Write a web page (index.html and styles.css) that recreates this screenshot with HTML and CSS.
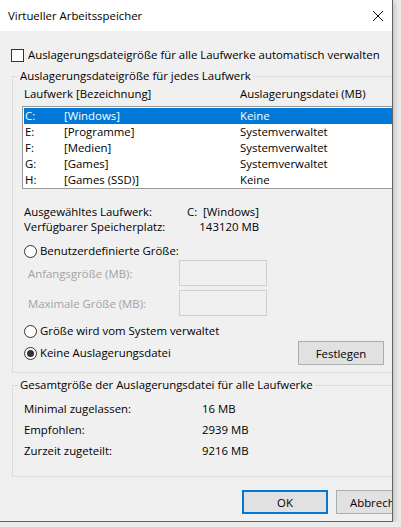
FILE: index.html
```html
<!DOCTYPE html>
<html>
<head>
    <title>Virtueller Arbeitsspeicher</title>
    <link rel="stylesheet" href="styles.css">
</head>
<body>
    <div class="window">
        <div class="titlebar">
            <span class="title">Virtueller Arbeitsspeicher</span>
            <svg class="close" width="12" height="12" viewBox="0 0 12 12">
                <path d="M1 1 L11 11 M11 1 L1 11" stroke="#111" stroke-width="1" fill="none"/>
            </svg>
        </div>
        <div class="content">
            <label class="check-row">
                <span class="checkbox"></span>
                Auslagerungsdateigröße für alle Laufwerke automatisch verwalten
            </label>

            <fieldset class="group group-drives">
                <legend>Auslagerungsdateigröße für jedes Laufwerk</legend>
                <div class="list-header">
                    <span class="col-drive">Laufwerk [Bezeichnung]</span>
                    <span>Auslagerungsdatei (MB)</span>
                </div>
                <div class="listbox">
                    <div class="list-row selected"><span class="col-letter">C:</span><span class="col-name">[Windows]</span><span>Keine</span></div>
                    <div class="list-row"><span class="col-letter">E:</span><span class="col-name">[Programme]</span><span>Systemverwaltet</span></div>
                    <div class="list-row"><span class="col-letter">F:</span><span class="col-name">[Medien]</span><span>Systemverwaltet</span></div>
                    <div class="list-row"><span class="col-letter">G:</span><span class="col-name">[Games]</span><span>Systemverwaltet</span></div>
                    <div class="list-row"><span class="col-letter">H:</span><span class="col-name">[Games (SSD)]</span><span>Keine</span></div>
                </div>

                <div class="info">
                    <div class="info-row"><span class="info-label">Ausgewähltes Laufwerk:</span><span class="info-value">C:&nbsp;&nbsp;[Windows]</span></div>
                    <div class="info-row"><span class="info-label">Verfügbarer Speicherplatz:</span><span class="info-value">143120 MB</span></div>
                </div>

                <label class="radio-row first">
                    <span class="radio"></span>
                    Benutzerdefinierte Größe:
                </label>
                <div class="size-row first">
                    <span class="size-label">Anfangsgröße (MB):</span>
                    <span class="size-input"></span>
                </div>
                <div class="size-row">
                    <span class="size-label">Maximale Größe (MB):</span>
                    <span class="size-input"></span>
                </div>
                <label class="radio-row second">
                    <span class="radio"></span>
                    Größe wird vom System verwaltet
                </label>
                <div class="radio-button-row">
                    <label class="radio-row">
                        <span class="radio checked"></span>
                        Keine Auslagerungsdatei
                    </label>
                    <button class="btn">Festlegen</button>
                </div>
            </fieldset>

            <fieldset class="group group-total">
                <legend>Gesamtgröße der Auslagerungsdatei für alle Laufwerke</legend>
                <div class="total-row first"><span class="total-label">Minimal zugelassen:</span><span>16 MB</span></div>
                <div class="total-row"><span class="total-label">Empfohlen:</span><span>2939 MB</span></div>
                <div class="total-row"><span class="total-label">Zurzeit zugeteilt:</span><span>9216 MB</span></div>
            </fieldset>

            <div class="buttons">
                <button class="btn btn-default">OK</button>
                <button class="btn">Abbrechen</button>
            </div>
        </div>
    </div>
</body>
</html>
```

FILE: styles.css
```css
/* General styles */
* {
  box-sizing: border-box;
}

body {
  margin: 0;
  padding: 0;
  background-color: #ebebeb;
  font-family: "Open Sans", "Noto Sans", sans-serif;
  font-size: 11.4px;
  color: #000;
}

.window {
  width: 393px;
  height: 522px;
  overflow: hidden;
  background-color: #f0f0f0;
  border-right: 1px solid #616161;
  border-bottom: 1px solid #616161;
  box-shadow: 2px 2px 5px rgba(0, 0, 0, 0.18);
}

/* Title bar */
.titlebar {
  height: 31px;
  background-color: #fff;
  display: flex;
  align-items: center;
  padding-left: 8px;
}

.title {
  flex: 1;
  line-height: 16px;
}

.close {
  margin-right: 8px;
}

/* Content */
.content {
  width: 434px;
  padding: 0 12px;
}

.check-row {
  display: flex;
  align-items: center;
  height: 16px;
  margin: 16px 0 0 -1px;
  line-height: 16px;
}

.checkbox {
  width: 13px;
  height: 13px;
  border: 1px solid #333;
  background-color: #fff;
  margin-right: 4px;
  flex-shrink: 0;
}

/* Group boxes */
.group {
  margin: 0;
  padding: 0 0 0 11px;
  border: 1px solid #dcdcdc;
}

.group legend {
  padding: 0 2px;
  margin-left: -6px;
  line-height: 16px;
}

.group-drives {
  margin-top: 5px;
  padding-bottom: 7px;
}

.group-total {
  margin-top: 4px;
  padding-bottom: 12px;
}

/* Drive list */
.list-header {
  display: flex;
  line-height: 16px;
  margin-top: 2px;
}

.col-drive {
  width: 216px;
}

.listbox {
  width: 400px;
  height: 83px;
  margin: 4px 0 0 -2px;
  padding: 1px;
  border: 1px solid #9a9a9a;
  background-color: #fff;
}

.list-row {
  display: flex;
  height: 16px;
  line-height: 16px;
  padding-left: 1px;
}

.list-row.selected {
  background-color: #0078d7;
  color: #fff;
}

.col-letter {
  width: 39px;
}

.col-name {
  width: 176px;
}

/* Selected drive info */
.info {
  margin-top: 15px;
}

.info-row {
  display: flex;
  line-height: 15px;
}

.info-label {
  width: 163px;
  flex-shrink: 0;
}

.info-value {
  width: 72px;
  flex-shrink: 0;
  text-align: right;
}

/* Radios and sizes */
.radio-row {
  display: flex;
  align-items: center;
  height: 16px;
  line-height: 16px;
}

.radio-row.first {
  margin-top: 9px;
}

.radio-row.second {
  margin-top: 7px;
}

.radio {
  width: 13px;
  height: 13px;
  border: 1px solid #333;
  border-radius: 50%;
  background-color: #fff;
  margin-right: 3px;
  display: flex;
  align-items: center;
  justify-content: center;
  flex-shrink: 0;
}

.radio.checked::after {
  content: "";
  width: 7px;
  height: 7px;
  border-radius: 50%;
  background-color: #333;
}

.size-row {
  display: flex;
  align-items: center;
  margin-top: 4px;
  padding-left: 4px;
  color: #a3a3a3;
}

.size-row.first {
  margin-top: 1px;
}

.size-label {
  width: 151px;
}

.size-input {
  width: 88px;
  height: 26px;
  border: 1px solid #cfcfcf;
}

.radio-button-row {
  display: flex;
  align-items: center;
  justify-content: space-between;
  width: 360px;
  margin-top: 2px;
}

/* Buttons */
.btn {
  font-family: inherit;
  font-size: inherit;
  color: #000;
  width: 86px;
  height: 24px;
  padding: 0;
  background-color: #e1e1e1;
  border: 1px solid #adadad;
  white-space: nowrap;
}

.btn-default {
  border: 2px solid #0078d7;
}

/* Totals */
.total-row {
  display: flex;
  height: 21px;
  line-height: 16px;
}

.total-row.first {
  margin-top: 8px;
}

.total-label {
  width: 178px;
}

.buttons {
  display: flex;
  justify-content: flex-end;
  gap: 8px;
  margin-top: 13px;
}
```
